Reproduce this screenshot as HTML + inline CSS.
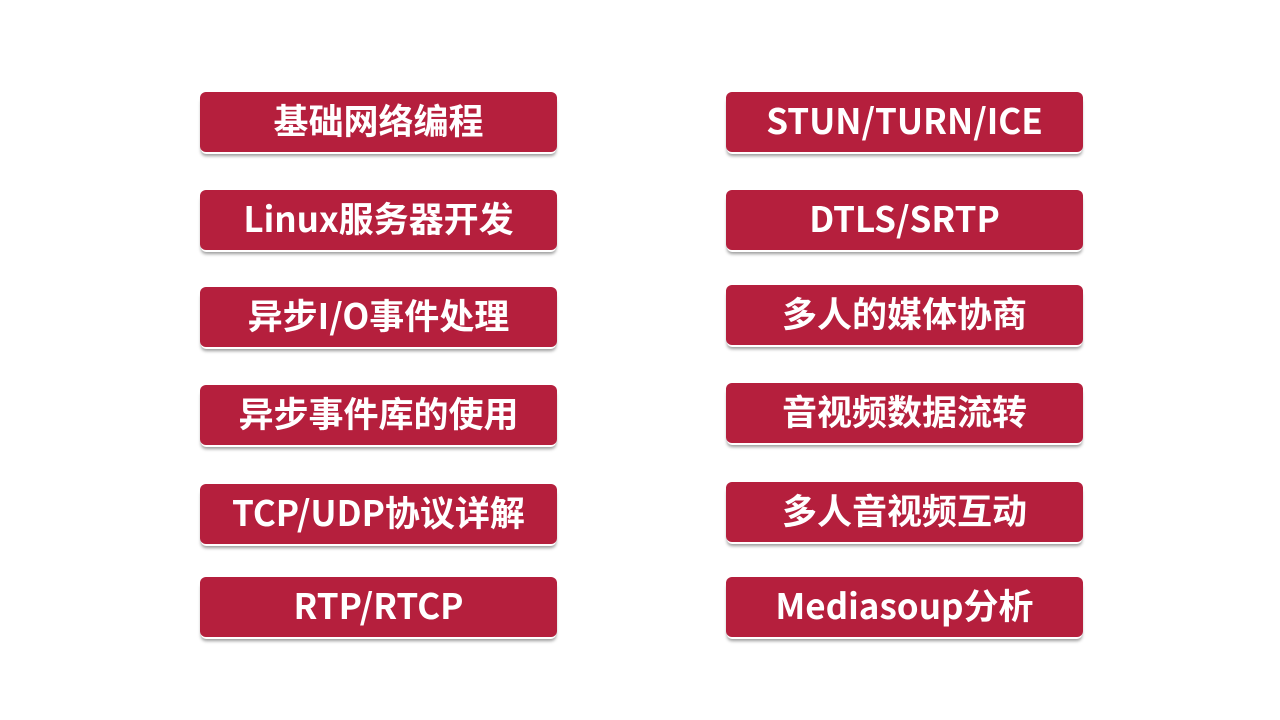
<!DOCTYPE html>
<html><head><meta charset="utf-8"><style>
html,body{margin:0;padding:0}
body{width:1280px;height:720px;background:#fff;position:relative;overflow:hidden;font-family:"Noto Sans CJK SC","Liberation Sans",sans-serif}
.b{position:absolute;width:357px;height:60px;background:#b51f3d;border-radius:6px;color:#fff;font-weight:bold;font-size:35px;line-height:60px;text-align:center;box-shadow:0 3px 0 -1px #fff,0 5px 3px -1px #9a9a9a;letter-spacing:0}
.b span{position:relative;top:-2px}
.l{left:200px}.r{left:726px}
</style></head><body>
<div class="b l" style="top:92px"><span>基础网络编程</span></div>
<div class="b l" style="top:190px"><span>Linux服务器开发</span></div>
<div class="b l" style="top:287px"><span>异步I/O事件处理</span></div>
<div class="b l" style="top:385px"><span>异步事件库的使用</span></div>
<div class="b l" style="top:484px"><span>TCP/UDP协议详解</span></div>
<div class="b l" style="top:577px"><span>RTP/RTCP</span></div>
<div class="b r" style="top:92px"><span>STUN/TURN/ICE</span></div>
<div class="b r" style="top:190px"><span>DTLS/SRTP</span></div>
<div class="b r" style="top:285px"><span>多人的媒体协商</span></div>
<div class="b r" style="top:383px"><span>音视频数据流转</span></div>
<div class="b r" style="top:482px"><span>多人音视频互动</span></div>
<div class="b r" style="top:577px"><span>Mediasoup分析</span></div>
</body></html>
